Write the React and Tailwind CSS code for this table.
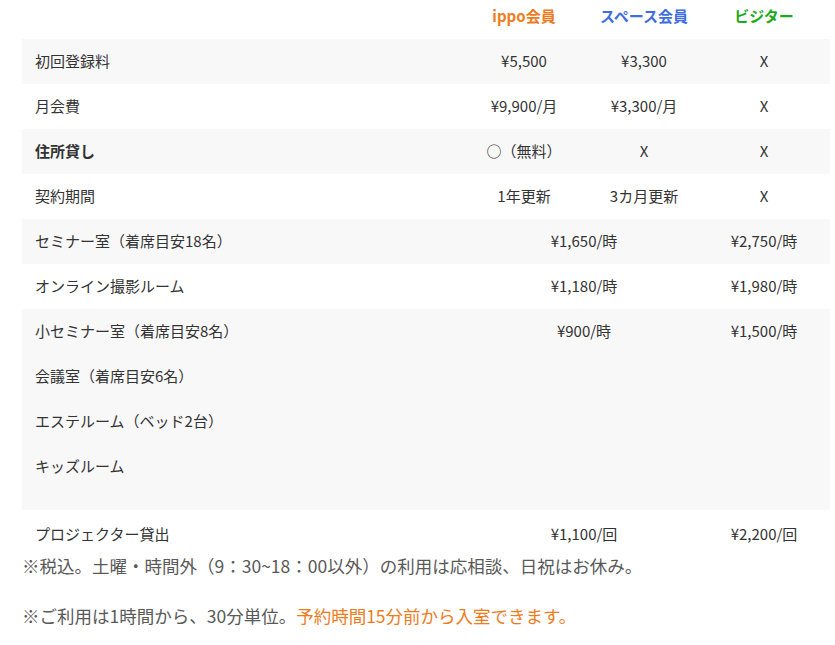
const ROWS = [
  { label: '初回登録料', cells: ['¥5,500', '¥3,300', 'X'], gray: true },
  { label: '月会費', cells: ['¥9,900/月', '¥3,300/月', 'X'] },
  { label: '住所貸し', cells: ['○（無料）', 'X', 'X'], gray: true, bold: true },
  { label: '契約期間', cells: ['1年更新', '3カ月更新', 'X'] },
  { label: 'セミナー室（着席目安18名）', merged: '¥1,650/時', visitor: '¥2,750/時', gray: true },
  { label: 'オンライン撮影ルーム', merged: '¥1,180/時', visitor: '¥1,980/時' },
]

const ROOMS = ['小セミナー室（着席目安8名）', '会議室（着席目安6名）', 'エステルーム（ベッド2台）', 'キッズルーム']

function Row({ row, extra = '' }) {
  return (
    <div className={`grid grid-cols-[442px_120px_120px_126px] h-[45px] items-center ${row.gray ? 'bg-[#f8f8f8]' : ''} ${extra}`}>
      <div className={`pl-[13px] ${row.bold ? 'font-bold' : ''}`}>{row.label}</div>
      {row.cells ? (
        <>
          <div className="text-center">{row.cells[0]}</div>
          <div className="text-center">{row.cells[1]}</div>
          <div className="text-center pr-[6px]">{row.cells[2]}</div>
        </>
      ) : (
        <>
          <div className="col-span-2 text-center">{row.merged}</div>
          <div className="text-center pr-[6px]">{row.visitor}</div>
        </>
      )}
    </div>
  )
}

export default function App() {
  return (
    <div className="w-[835px] h-[645px] bg-white text-[#333] font-['Noto_Sans_CJK_JP',sans-serif] text-[15px] overflow-hidden">
      <div className="ml-[22px] w-[808px]">
        <div className="grid grid-cols-[442px_120px_120px_126px] h-[39px] items-center font-bold pb-[7px]">
          <div />
          <div className="text-center text-[#ee7b1c]">ippo会員</div>
          <div className="text-center text-[#3d6de0]">スペース会員</div>
          <div className="text-center text-[#1daa1d] pr-[6px]">ビジター</div>
        </div>

        {ROWS.map(r => <Row key={r.label} row={r} />)}

        <div className="grid grid-cols-[442px_120px_120px_126px] bg-[#f8f8f8] pb-[21px]">
          <div className="pl-[13px] flex flex-col">
            {ROOMS.map(name => (
              <div key={name} className="h-[45px] flex items-center">{name}</div>
            ))}
          </div>
          <div className="col-span-2 text-center h-[45px] flex items-center justify-center">¥900/時</div>
          <div className="text-center pr-[6px] h-[45px] flex items-center justify-center">¥1,500/時</div>
        </div>

        <Row row={{ label: 'プロジェクター貸出', merged: '¥1,100/回', visitor: '¥2,200/回' }} extra="pt-[4px]" />
      </div>

      <div className="pl-[22px] text-[17.5px] text-[#595959]">
        <p className="h-[22px] flex items-center">※税込。土曜・時間外（9：30~18：00以外）の利用は応相談、日祝はお休み。</p>
        <p className="h-[30px] flex items-center mt-[24px]">
          ※ご利用は1時間から、30分単位。<span className="text-[#ee7b1c]">予約時間15分前から入室できます。</span>
        </p>
      </div>
    </div>
  )
}
